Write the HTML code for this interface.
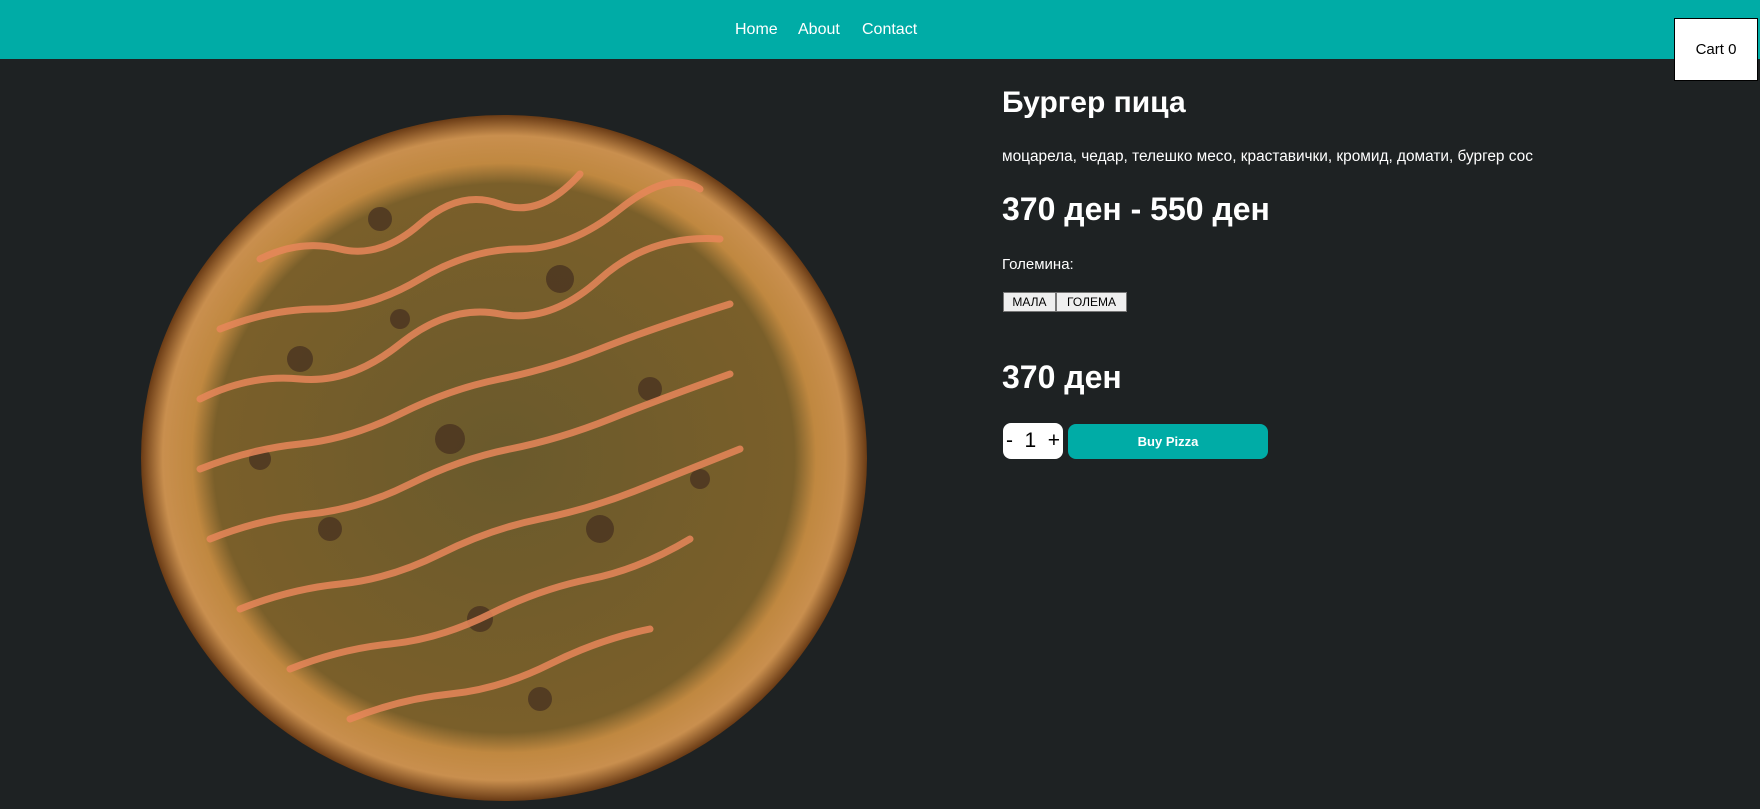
<!DOCTYPE html>
<html><head><meta charset="utf-8"><style>
*{margin:0;padding:0;box-sizing:border-box}
body{width:1760px;height:809px;background:#1e2223;font-family:"Liberation Sans","DejaVu Sans",sans-serif;color:#fff;position:relative;overflow:hidden}
.hdr{position:absolute;left:0;top:0;width:1760px;height:59px;background:#00aca6}
.nav{position:absolute;top:21px;font-size:16px;color:#fff}
.cart{position:absolute;left:1674px;top:18px;width:84px;height:63px;background:#fff;border:1px solid #000;color:#000;font-size:15px;display:flex;align-items:center;justify-content:center}
.t{position:absolute;left:1002px;white-space:nowrap}
.sz{position:absolute;top:292px;height:20px;background:#efefef;border:1px solid #767676;color:#000;font-size:12px;display:flex;align-items:center;justify-content:center}
</style></head><body>
<div class="hdr"></div>
<div class="nav" style="left:735px">Home</div>
<div class="nav" style="left:798px">About</div>
<div class="nav" style="left:862px">Contact</div>
<div class="cart">Cart 0</div>
<svg style="position:absolute;left:0;top:59px" width="980" height="750">
<defs>
<radialGradient id="g" cx="50%" cy="50%" r="50%">
<stop offset="0" stop-color="#6a5a2c"/>
<stop offset="0.8" stop-color="#7a5f2a"/>
<stop offset="0.86" stop-color="#c08840"/>
<stop offset="0.94" stop-color="#c98f4e"/>
<stop offset="1" stop-color="#6a3b15"/>
</radialGradient>
</defs>
<ellipse cx="504" cy="399" rx="363" ry="343" fill="url(#g)"/>
<g fill="#4a3320" opacity="0.8">
<circle cx="380" cy="160" r="12"/><circle cx="560" cy="220" r="14"/><circle cx="300" cy="300" r="13"/><circle cx="650" cy="330" r="12"/><circle cx="450" cy="380" r="15"/><circle cx="330" cy="470" r="12"/><circle cx="600" cy="470" r="14"/><circle cx="480" cy="560" r="13"/><circle cx="700" cy="420" r="10"/><circle cx="260" cy="400" r="11"/><circle cx="540" cy="640" r="12"/><circle cx="400" cy="260" r="10"/>
</g>
<g stroke="#e8875a" stroke-width="7" fill="none" opacity="0.85" stroke-linecap="round">
<path d="M260 200 q40 -20 80 -10 t80 -25 t80 -20 t80 -30"/>
<path d="M220 270 q50 -20 100 -20 t100 -30 t100 -30 t100 -40 t80 -20"/>
<path d="M200 340 q50 -25 100 -20 t100 -35 t100 -30 t100 -35 t120 -40"/>
<path d="M200 410 q50 -20 100 -25 t100 -30 t100 -35 t100 -30 t130 -45"/>
<path d="M210 480 q50 -20 100 -25 t100 -30 t100 -35 t100 -30 t120 -45"/>
<path d="M240 550 q50 -20 100 -25 t100 -30 t100 -35 t100 -30 t100 -40"/>
<path d="M290 610 q50 -20 100 -25 t100 -30 t100 -35 t100 -40"/>
<path d="M350 660 q50 -20 100 -25 t100 -30 t100 -35"/>
</g>
</svg>
<div class="t" style="top:86px;font-size:30px;font-weight:bold">Бургер пица</div>
<div class="t" style="top:148px;font-size:15.4px">моцарела, чедар, телешко месо, краставички, кромид, домати, бургер сос</div>
<div class="t" style="top:191px;font-size:32px;font-weight:bold">370 ден - 550 ден</div>
<div class="t" style="top:256px;font-size:15px">Големина:</div>
<div class="sz" style="left:1003px;width:53px">МАЛА</div>
<div class="sz" style="left:1056px;width:71px">ГОЛЕМА</div>
<div class="t" style="top:359px;font-size:32px;font-weight:bold">370 ден</div>
<div style="position:absolute;left:1003px;top:423px;width:60px;height:36px;background:#fff;border-radius:8px;color:#000;font-size:21px;display:flex;align-items:center;justify-content:space-between;padding:0 3px">
<span>-</span><span>1</span><span>+</span></div>
<div style="position:absolute;left:1068px;top:424px;width:200px;height:35px;background:#00aca6;border-radius:8px;color:#fff;font-size:13px;font-weight:bold;display:flex;align-items:center;justify-content:center">Buy Pizza</div>
</body></html>
